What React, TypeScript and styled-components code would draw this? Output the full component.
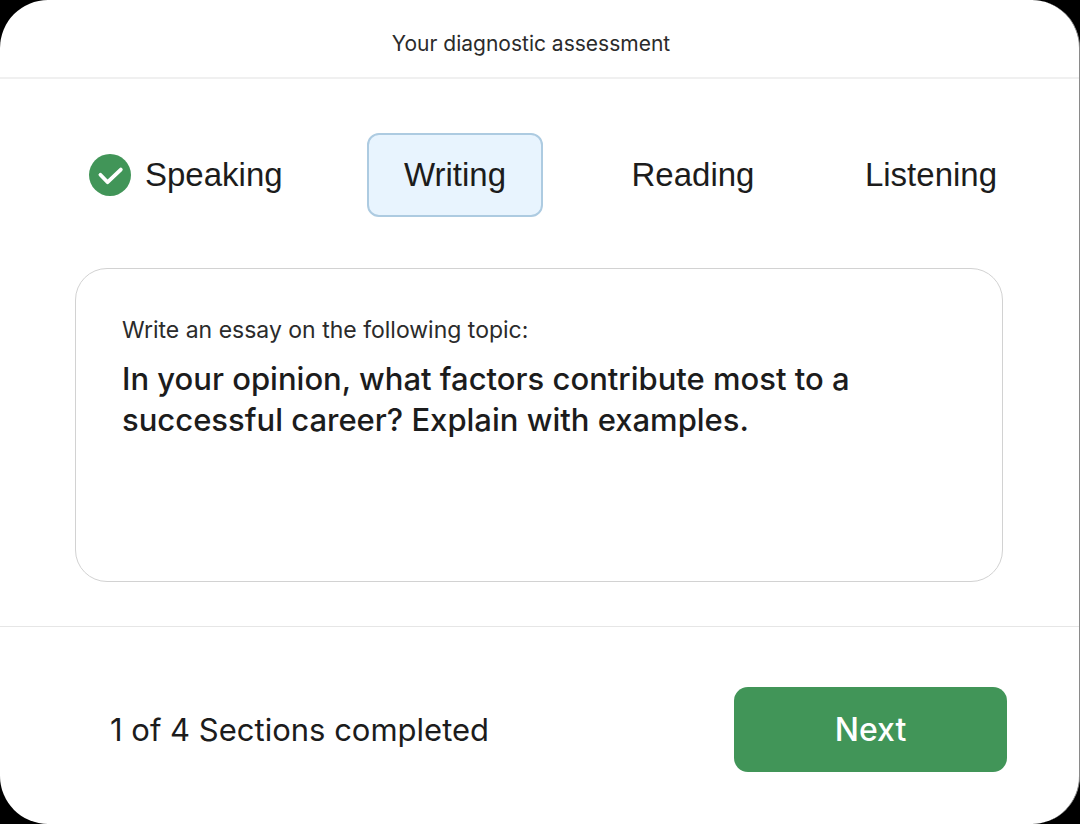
import React from "react";
import styled, { createGlobalStyle, css } from "styled-components";

const GlobalStyle = createGlobalStyle`
  * { box-sizing: border-box; }
  html, body { margin: 0; background: #000; }
  body { font-family: Inter, "Liberation Sans", sans-serif; color: #1c1c1c; }
`;

const Card = styled.div`
  min-height: 100vh;
  display: flex;
  flex-direction: column;
  background: #fff;
  border-right: 1px solid #8a8a8a;
  border-radius: 48px;
  overflow: hidden;
`;

const Header = styled.header`
  padding: 27px 17px 16px 0;
  border-bottom: 2px solid #f0f0f0;
  text-align: center;
`;

const Title = styled.h1`
  margin: 0;
  color: #2b2b2b;
  font-size: 21px;
  line-height: 34px;
  font-weight: 400;
`;

const Main = styled.main`
  flex: 1;
  display: flex;
  flex-direction: column;
  padding: 54px 0 44px;
`;

const Tabs = styled.nav`
  display: grid;
  grid-template-columns: 247fr 238fr 238fr 238fr;
  justify-items: center;
  align-items: center;
  padding: 0 29px 0 89px;
  margin-bottom: 51px;
`;

const Tab = styled.button<{ $active?: boolean }>`
  display: flex;
  align-items: center;
  gap: 14px;
  height: 84px;
  padding: 0;
  border: 0;
  background: none;
  color: inherit;
  font: 400 33px/40px "Liberation Sans", Arial, sans-serif;
  cursor: pointer;

  &:first-child {
    justify-self: start;
  }

  ${(p) =>
    p.$active &&
    css`
      padding: 0 35px;
      border: 2px solid #adcbe1;
      border-radius: 12px;
      background: #e8f4fe;
    `}
`;

const Prompt = styled.section`
  flex: 1;
  margin: 0 76px 0 75px;
  padding: 45px 46px;
  border: 1px solid #d2d2d2;
  border-radius: 32px;
`;

const Instruction = styled.p`
  margin: 0;
  color: #2b2b2b;
  font-size: 23px;
  line-height: 32px;
`;

const Question = styled.h2`
  margin: 12px 0 0;
  font-size: 31px;
  line-height: 41px;
  font-weight: 500;
`;

const Footer = styled.footer`
  display: flex;
  align-items: center;
  justify-content: space-between;
  padding: 60px 72px 52px 110px;
  border-top: 1px solid #e6e6e6;
`;

const Progress = styled.p`
  margin: 0;
  font-size: 31px;
  line-height: 40px;
`;

const NextButton = styled.button`
  width: 273px;
  height: 85px;
  border: 0;
  border-radius: 14px;
  background: #419558;
  color: #fff;
  font: 500 32px/40px Inter, sans-serif;
  cursor: pointer;
`;

const CheckIcon = () => (
  <svg width="42" height="42" viewBox="0 0 42 42" fill="none" aria-hidden="true">
    <circle cx="21" cy="21" r="21" fill="#419558" />
    <path d="M11.4 20.8L18.6 28.2L31.8 15.6" stroke="#fff" strokeWidth="3.8" strokeLinecap="round" strokeLinejoin="round" />
  </svg>
);

const sections = ["Speaking", "Writing", "Reading", "Listening"];

export default function App() {
  return (
    <>
      <GlobalStyle />
      <Card>
        <Header>
          <Title>Your diagnostic assessment</Title>
        </Header>
        <Main>
          <Tabs aria-label="Sections">
            {sections.map((name) => (
              <Tab key={name} type="button" $active={name === "Writing"}>
                {name === "Speaking" && <CheckIcon />}
                {name}
              </Tab>
            ))}
          </Tabs>
          <Prompt>
            <Instruction>Write an essay on the following topic:</Instruction>
            <Question>
              In your opinion, what factors contribute most to a successful career? Explain with examples.
            </Question>
          </Prompt>
        </Main>
        <Footer>
          <Progress>1 of 4 Sections completed</Progress>
          <NextButton type="button">Next</NextButton>
        </Footer>
      </Card>
    </>
  );
}
